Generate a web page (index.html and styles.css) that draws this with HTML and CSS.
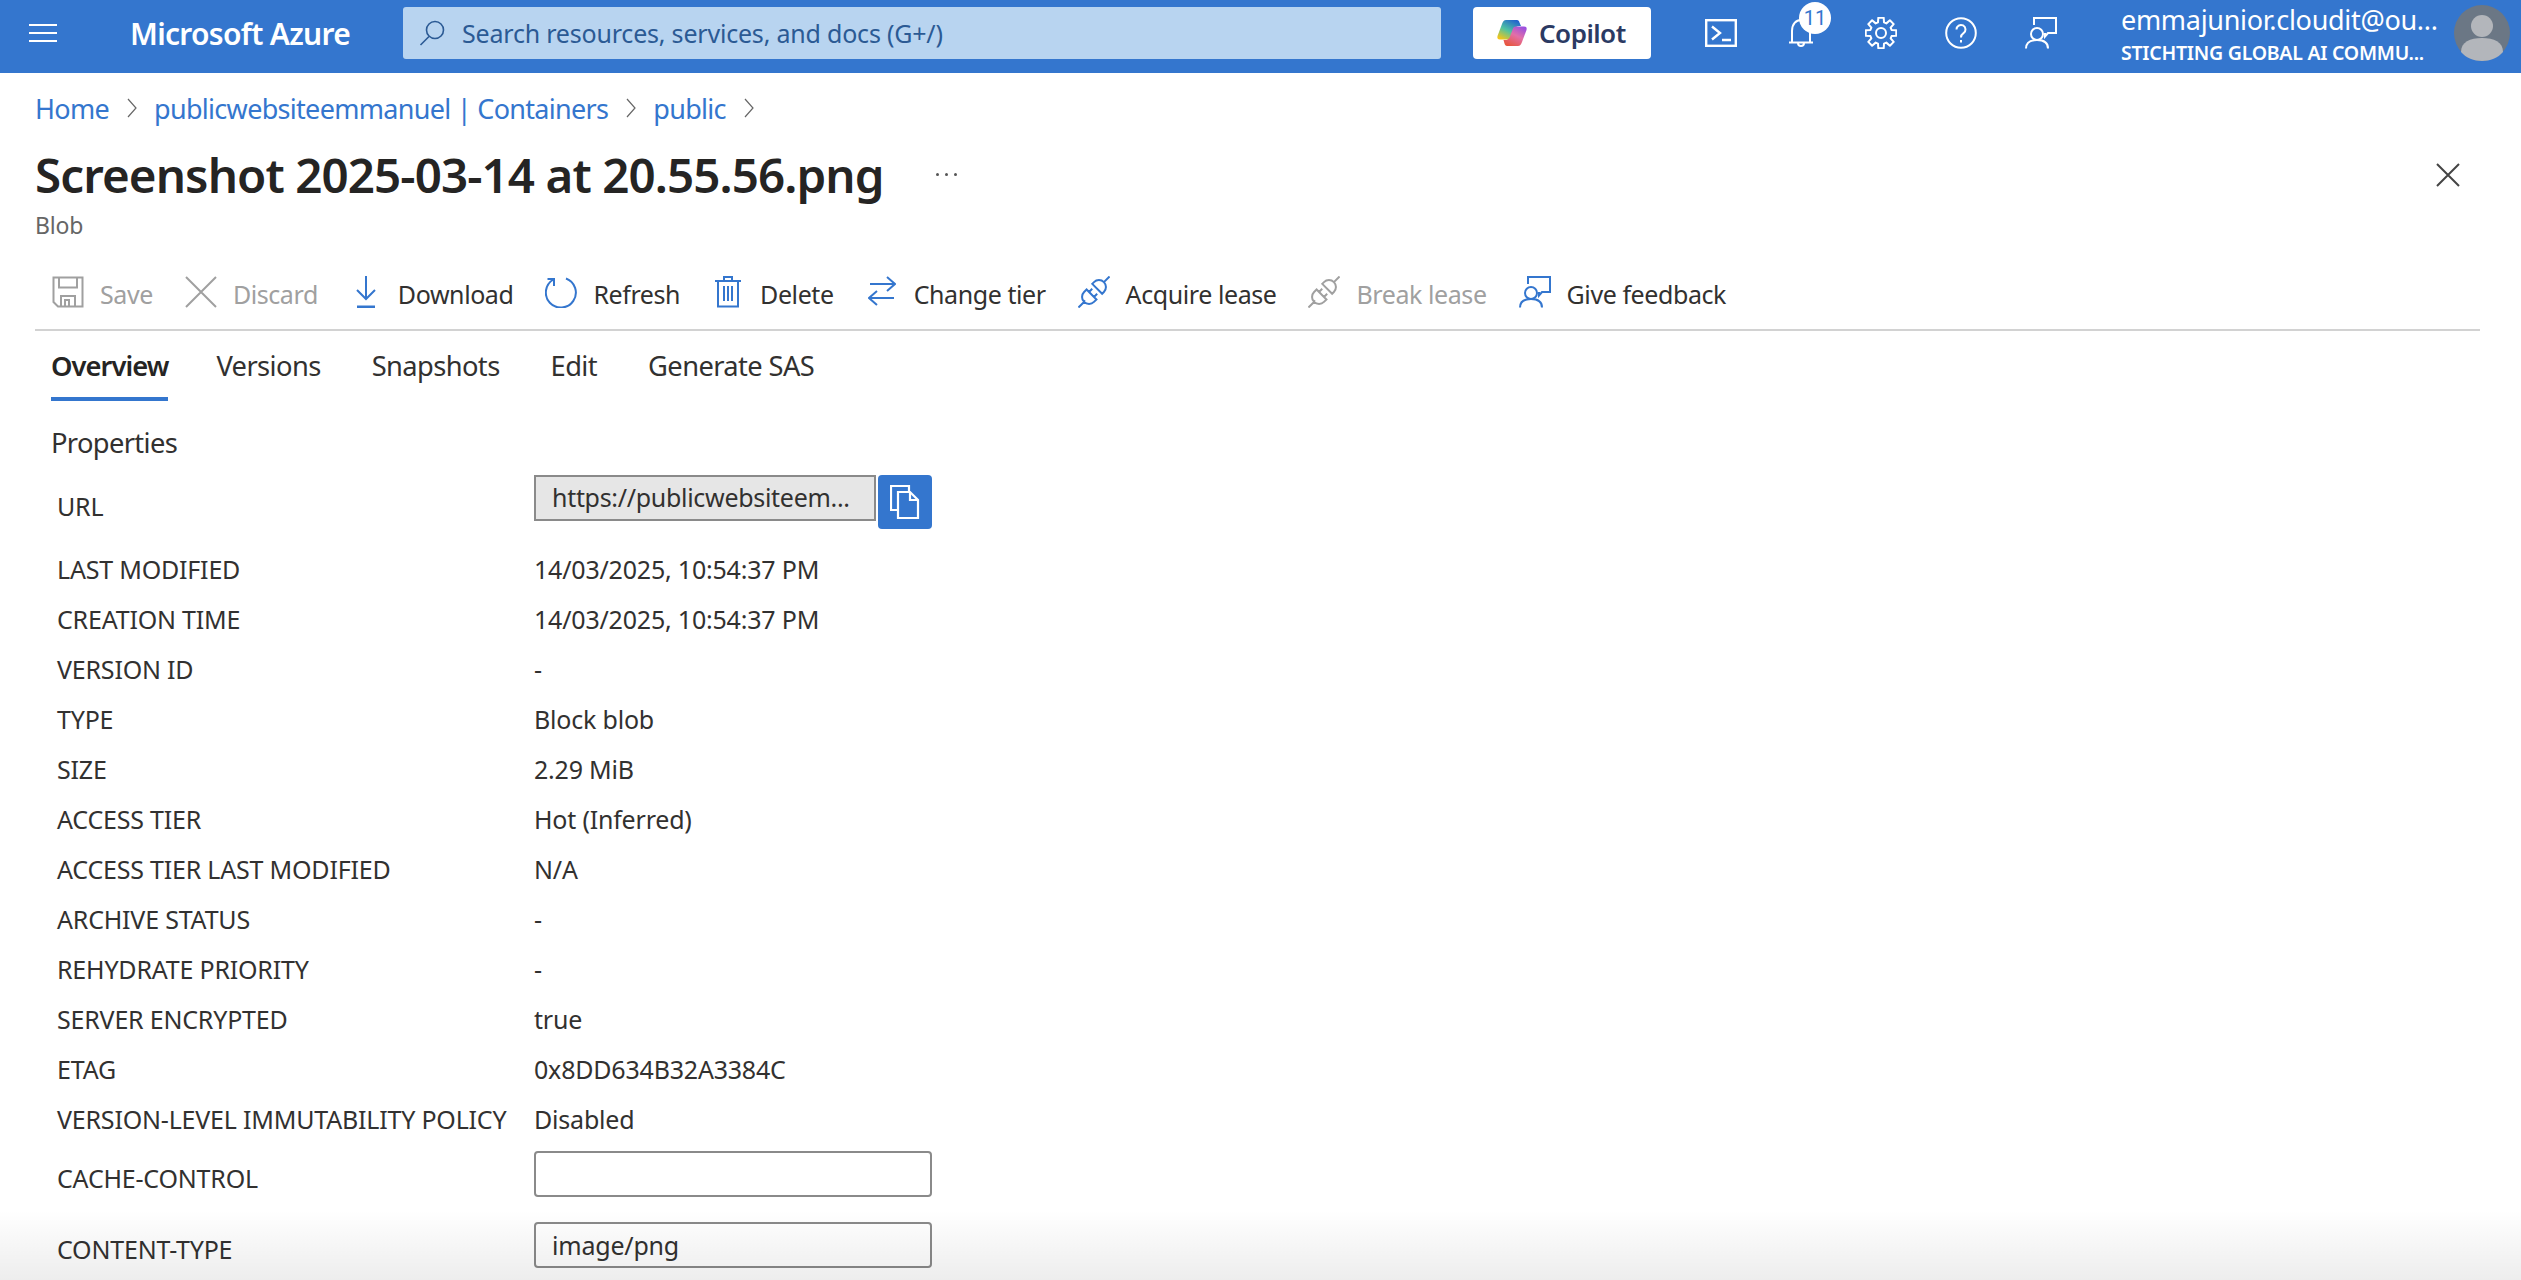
FILE: index.html
```html
<!DOCTYPE html>
<html lang="en">
<head>
<meta charset="utf-8">
<title>Screenshot 2025-03-14 at 20.55.56.png - Microsoft Azure</title>
<link rel="stylesheet" href="styles.css">
</head>
<body>
<header class="topbar">
  <button class="hamburger" aria-label="Menu"><span></span><span></span><span></span></button>
  <div class="brand">Microsoft Azure</div>
  <div class="search">
    <svg class="search-icon" viewBox="0 0 26 26"><circle cx="16" cy="10" r="8.5"/><path d="M10 16.5 1.5 25"/></svg>
    <span>Search resources, services, and docs (G+/)</span>
  </div>
  <div class="copilot">
    <svg class="copilot-logo" viewBox="0 0 30 28">
      <defs>
        <linearGradient id="cpa" x1="0.2" y1="1" x2="0.8" y2="0"><stop offset="0" stop-color="#f5c518"/><stop offset="0.45" stop-color="#4fc3a1"/><stop offset="1" stop-color="#1f5fd0"/></linearGradient>
        <linearGradient id="cpb" x1="0.2" y1="1" x2="0.8" y2="0"><stop offset="0" stop-color="#e8553a"/><stop offset="0.55" stop-color="#e26fa8"/><stop offset="1" stop-color="#9a4fe0"/></linearGradient>
      </defs>
      <path fill="url(#cpa)" d="M9 1h11c1.500 0 2 1 2.500 2.500L24 7c-3-.5-5.500.5-6.500 3.500l-3 8c-.5 1.500-1.500 2-3 2H3C.5 20.500 0 19 .5 17L5 5c1-2.500 2-4 4-4z"/>
      <path fill="url(#cpb)" d="M21 27H10c-1.500 0-2-1-2.500-2.500L6.500 21c3 .5 5.500-.5 6.500-3.500l3-8c.5-1.500 1.500-2 3-2h8c2.500 0 3 1.500 2.500 3.500L25 23c-1 2.500-2 4-4 4z"/>
    </svg>
    <span>Copilot</span>
  </div>
  <div class="top-icons">
    <svg class="ti ti-term" viewBox="0 0 32 28"><rect x="1.200" y="1.200" width="29.600" height="25.600"/><path d="M7 7.500 15 14l-8 6.500M17 21h9"/></svg>
    <div class="bell">
      <svg class="ti" viewBox="0 0 24 28"><path d="M3 23V12C3 5 7 1 12 1s9 4 9 11v11M0 23.500h24M9 24c0 4 6 4 6 0"/></svg>
      <span class="badge">11</span>
    </div>
    <svg class="ti ti-gear" viewBox="0 0 32 32"><path d="M12.970 5.430 13.310.74h5.380l.34 4.690 2.300.95 3.560-3.080 3.810 3.810-3.080 3.560.95 2.300 4.690.34v5.380l-4.690.34-.95 2.300 3.080 3.560-3.810 3.810-3.560-3.080-2.300.95-.34 4.690h-5.380l-.34-4.690-2.300-.95-3.560 3.080-3.810-3.810 3.080-3.560-.95-2.300-4.690-.34v-5.380l4.690-.34.95-2.300L3.300 7.110 7.110 3.300l3.560 3.080z"/><circle cx="16" cy="16" r="5"/></svg>
    <svg class="ti ti-help" viewBox="0 0 32 32"><circle cx="16" cy="16" r="14.800"/><path d="M11.500 12.500a4.500 4.500 0 1 1 7 3.700c-1.800 1.200-2.500 2-2.500 4.300M16 23v2.500"/></svg>
    <svg class="ti ti-fb" viewBox="0 0 32 32"><path d="M9 8V1h22v15h-8l-3 3.500V16"/><circle cx="12" cy="17" r="6"/><path d="M1 31.500c0-6 4.500-8.500 11-8.500s11 2.500 11 8.500"/></svg>
  </div>
  <div class="account">
    <div class="acc-name">emmajunior.cloudit@ou...</div>
    <div class="acc-org">STICHTING GLOBAL AI COMMU...</div>
  </div>
  <svg class="avatar" viewBox="0 0 56 56"><circle cx="28" cy="28" r="28" fill="#6b7785"/><circle cx="28" cy="21" r="11" fill="#b3b6bb"/><path fill="#b3b6bb" d="M7 47c0-10 9-14 21-14s21 4 21 14c-5 6-13 9-21 9S12 53 7 47z"/></svg>
</header>

<main class="page">
  <nav class="crumbs">
    <a>Home</a>
    <svg class="chev" viewBox="0 0 10 20"><path d="M1 1l8 9-8 9"/></svg>
    <a>publicwebsiteemmanuel | Containers</a>
    <svg class="chev" viewBox="0 0 10 20"><path d="M1 1l8 9-8 9"/></svg>
    <a>public</a>
    <svg class="chev" viewBox="0 0 10 20"><path d="M1 1l8 9-8 9"/></svg>
  </nav>

  <div class="title-row">
    <h1>Screenshot 2025-03-14 at 20.55.56.png</h1>
    <div class="more"><i></i><i></i><i></i></div>
    <svg class="close" viewBox="0 0 24 24"><path d="M1 1l22 22M23 1 1 23"/></svg>
  </div>
  <div class="subtitle">Blob</div>

  <div class="toolbar">
    <div class="tool off tool-save">
      <svg viewBox="0 0 32 32"><path d="M1.500 1.500h29v29H6l-4.500-4.500z"/><path d="M7 1.500v10h18v-10M9 30.500V20h14v10.500M13 30v-6h4v6"/></svg>
      <span>Save</span>
    </div>
    <div class="tool off tool-discard">
      <svg viewBox="0 0 32 32"><path d="M1 1l30 30M31 1 1 31"/></svg>
      <span>Discard</span>
    </div>
    <div class="tool tool-download">
      <svg class="ic-narrow" viewBox="0 0 20 32"><path d="M10 0v23M1 14l9 9 9-9"/><path class="thick" d="M1 31h18"/></svg>
      <span>Download</span>
    </div>
    <div class="tool tool-refresh">
      <svg viewBox="0 0 32 32"><path d="M21 2.500a15 15 0 1 1-12.500 1"/><path d="M2.500 3h6.500V10"/></svg>
      <span>Refresh</span>
    </div>
    <div class="tool tool-delete">
      <svg class="ic-trash" viewBox="0 0 26 32"><path d="M3 5v25.500h20V5M0 5h26M9 5V1h8v4M9 10v15M13 10v15M17 10v15"/></svg>
      <span>Delete</span>
    </div>
    <div class="tool tool-tier">
      <svg class="ic-tier" viewBox="0 0 28 32"><path d="M2 8h25M19 1l8 7-8 7M26 22H1M9 15l-8 7 8 7"/></svg>
      <span>Change tier</span>
    </div>
    <div class="tool tool-acquire">
      <svg viewBox="0 0 32 32"><g transform="rotate(-45 16 16)"><path d="M-6 16H3M3 16v-1M12.500 9H9a7 7 0 0 0 0 14h3.500zM12.500 12.500H17M12.500 19.500H17M20.500 9H23a7 7 0 0 1 0 14h-2.500zM30 16h8"/></g></svg>
      <span>Acquire lease</span>
    </div>
    <div class="tool off tool-break">
      <svg viewBox="0 0 32 32"><g transform="rotate(-45 16 16)"><path d="M-6 16H3M3 16v-1M12.500 9H9a7 7 0 0 0 0 14h3.500zM12.500 12.500H17M12.500 19.500H17M20.500 9H23a7 7 0 0 1 0 14h-2.500zM30 16h8"/></g></svg>
      <span>Break lease</span>
    </div>
    <div class="tool tool-feedback">
      <svg viewBox="0 0 32 32"><path d="M9 8V1h22v15h-8l-3 3.500V16"/><circle cx="12" cy="17" r="6"/><path d="M1 31.500c0-6 4.500-8.500 11-8.500s11 2.500 11 8.500"/></svg>
      <span>Give feedback</span>
    </div>
  </div>

  <div class="tabs">
    <a class="tab active">Overview</a>
    <a class="tab">Versions</a>
    <a class="tab">Snapshots</a>
    <a class="tab">Edit</a>
    <a class="tab">Generate SAS</a>
  </div>

  <h2 class="section">Properties</h2>

  <div class="props">
    <div class="prop prop-url">
      <div class="key">URL</div>
      <div class="val url-wrap">
        <div class="url-box">https://publicwebsiteem...</div>
        <button class="copy" aria-label="Copy">
          <svg viewBox="0 0 30 34"><path d="M19 6V1H1v24h6"/><path d="M8 7h12l8 8v18H8z"/><path d="M20 7v8h8"/></svg>
        </button>
      </div>
    </div>
    <div class="prop"><div class="key">LAST MODIFIED</div><div class="val">14/03/2025, 10:54:37 PM</div></div>
    <div class="prop"><div class="key">CREATION TIME</div><div class="val">14/03/2025, 10:54:37 PM</div></div>
    <div class="prop"><div class="key">VERSION ID</div><div class="val">-</div></div>
    <div class="prop"><div class="key">TYPE</div><div class="val">Block blob</div></div>
    <div class="prop"><div class="key">SIZE</div><div class="val">2.29 MiB</div></div>
    <div class="prop"><div class="key">ACCESS TIER</div><div class="val">Hot (Inferred)</div></div>
    <div class="prop"><div class="key">ACCESS TIER LAST MODIFIED</div><div class="val">N/A</div></div>
    <div class="prop"><div class="key">ARCHIVE STATUS</div><div class="val">-</div></div>
    <div class="prop"><div class="key">REHYDRATE PRIORITY</div><div class="val">-</div></div>
    <div class="prop"><div class="key">SERVER ENCRYPTED</div><div class="val">true</div></div>
    <div class="prop"><div class="key">ETAG</div><div class="val">0x8DD634B32A3384C</div></div>
    <div class="prop"><div class="key">VERSION-LEVEL IMMUTABILITY POLICY</div><div class="val">Disabled</div></div>
    <div class="prop prop-input">
      <div class="key">CACHE-CONTROL</div>
      <input class="field" type="text" value="">
    </div>
    <div class="prop prop-input">
      <div class="key">CONTENT-TYPE</div>
      <input class="field" type="text" value="image/png">
    </div>
  </div>
</main>
<div class="bottom-fade"></div>
</body>
</html>
```

FILE: styles.css
```css
* { box-sizing: border-box; }
html, body { margin: 0; height: 1280px; overflow: hidden; background: #fff; }
body {
  font-family: "Noto Sans", "Open Sans", "Liberation Sans", sans-serif;
  font-size: 25px;
  letter-spacing: -0.2px;
  color: #323130;
}

/* top bar */
.topbar {
  height: 73px;
  padding-bottom: 7px;
  background: #3476ce;
  display: flex;
  align-items: center;
  color: #fff;
}
.hamburger {
  width: 28px;
  height: 18px;
  margin-left: 29px;
  padding: 0;
  border: 0;
  background: none;
  display: flex;
  flex-direction: column;
  justify-content: space-between;
}
.hamburger span { display: block; height: 2px; background: #fff; }
.brand {
  margin-left: 73px;
  width: 273px;
  font-size: 30px;
  font-weight: 600;
  letter-spacing: -0.7px;
  white-space: nowrap;
}
.search {
  width: 1038px;
  height: 52px;
  padding-left: 16px;
  background: #b8d4f0;
  border-radius: 3px;
  display: flex;
  align-items: center;
  color: #2b5a94;
}
.search-icon {
  width: 26px;
  height: 26px;
  margin-right: 17px;
  fill: none;
  stroke: #2b5a94;
  stroke-width: 1.6;
}
.copilot {
  width: 178px;
  height: 52px;
  margin-left: 32px;
  background: #fff;
  border-radius: 4px;
  display: flex;
  align-items: center;
  padding-left: 24px;
  color: #2b3a63;
  font-size: 26px;
  font-weight: 600;
  letter-spacing: -0.5px;
}
.copilot-logo { width: 30px; height: 28px; margin-right: 12px; }
.top-icons { display: flex; align-items: center; margin-left: 54px; width: 396px; }
.ti { display: block; fill: none; stroke: #fff; stroke-width: 2; }
.ti-term { width: 32px; height: 28px; stroke-width: 2.4; }
.bell { position: relative; width: 24px; height: 28px; margin-left: 52px; }
.bell .ti { width: 24px; height: 28px; }
.badge {
  position: absolute;
  left: 10px;
  top: -17px;
  width: 32px;
  height: 32px;
  border-radius: 50%;
  background: #fff;
  color: #3476ce;
  font-family: Roboto, sans-serif;
  font-size: 20px;
  letter-spacing: 0;
  line-height: 32px;
  text-align: center;
}
.ti-gear { width: 32px; height: 32px; margin-left: 52px; stroke-linejoin: round; }
.ti-help { width: 32px; height: 32px; margin-left: 48px; }
.ti-fb { width: 32px; height: 32px; margin-left: 48px; }
.account { width: 333px; margin-left: 20px; white-space: nowrap; padding-top: 2px; }
.acc-name { font-size: 27px; line-height: 38px; letter-spacing: -0.3px; }
.acc-org { font-size: 19.5px; line-height: 28px; font-weight: 600; letter-spacing: -0.25px; }
.avatar { width: 56px; height: 56px; }

/* page */
.page { padding: 0 41px 0 35px; }
.crumbs {
  height: 70px;
  display: flex;
  align-items: center;
  color: #3476ce;
  font-size: 27px;
  letter-spacing: -0.7px;
  white-space: nowrap;
}
.chev { width: 10px; height: 20px; margin: 0 17px 0 18px; fill: none; stroke: #666; stroke-width: 1.2; }
.title-row {
  height: 66px;
  padding-bottom: 3px;
  display: flex;
  align-items: center;
}
h1 {
  margin: 0;
  font-size: 47.5px;
  font-weight: 600;
  letter-spacing: -0.9px;
  color: #252423;
  white-space: nowrap;
}
.more { display: flex; gap: 6px; margin-left: 52px; }
.more i { width: 3px; height: 3px; border-radius: 50%; background: #555; }
.close { width: 24px; height: 24px; margin-left: auto; margin-right: 20px; fill: none; stroke: #444; stroke-width: 2; }
.subtitle { height: 32px; line-height: 32px; font-size: 23px; color: #666; }

.toolbar {
  height: 90px;
  padding: 20px 0 2px 17px;
  display: flex;
  align-items: center;
  border-bottom: 2px solid #d2d2d2;
  white-space: nowrap;
  letter-spacing: -0.42px;
}
.tool { display: flex; align-items: center; gap: 16px; margin-right: 32px; }
.tool svg {
  width: 32px;
  height: 32px;
  margin-top: -4px;
  fill: none;
  stroke: #3476ce;
  stroke-width: 2;
  flex: none;
}
.tool svg.ic-narrow { width: 20px; margin-left: 6px; margin-right: 6px; }
.tool svg.ic-trash { width: 26px; margin-left: 3px; margin-right: 3px; }
.tool svg.ic-tier { width: 28px; margin-left: 2px; margin-right: 2px; }
.tool .thick { stroke-width: 3; }
.tool.off { color: #a0a0a0; }
.tool.off svg { stroke: #a0a0a0; }

.tabs { height: 70px; padding-left: 16px; display: flex; gap: 51px; font-size: 27.3px; letter-spacing: -0.6px; }
.tab { height: 70px; padding-top: 4px; line-height: 62px; white-space: nowrap; border-bottom: 4px solid transparent; }
.tab.active { margin-right: -3px; font-weight: 600; letter-spacing: -0.95px; color: #252423; border-bottom-color: #3476ce; }

.section {
  height: 74px;
  margin: 0;
  padding: 20px 0 0 16px;
  font-size: 27.3px;
  font-weight: 400;
  line-height: 44px;
  letter-spacing: -0.65px;
}

.props { padding-left: 22px; }
.prop { display: flex; align-items: center; height: 50px; white-space: nowrap; }
.key { width: 477px; flex: none; }
.prop-url { height: 54px; margin-bottom: 15px; }
.prop-url .key { padding-top: 8px; }
.url-wrap { display: flex; align-items: flex-start; height: 54px; gap: 2px; }
.url-box {
  width: 342px;
  height: 46px;
  padding-left: 16px;
  border: 2px solid #8a8a8a;
  background: #e6e6e6;
  line-height: 40px;
  letter-spacing: -0.3px;
}
.copy {
  width: 54px;
  height: 54px;
  padding: 0;
  border: 0;
  border-radius: 4px;
  background: #3476ce;
  display: flex;
  align-items: center;
  justify-content: center;
}
.copy svg { width: 30px; height: 34px; fill: none; stroke: #fff; stroke-width: 2.2; }
.prop-input { height: 46px; margin-top: 7px; }
.prop-input + .prop-input { margin-top: 25px; }
.prop-input .key { padding-top: 8px; }
.field {
  width: 398px;
  height: 46px;
  padding: 0 16px;
  border: 2px solid #8a8a8a;
  border-radius: 4px;
  background: #fff;
  font: inherit;
  letter-spacing: inherit;
  color: #323130;
  outline: none;
}

/* soft shadow over the bottom edge of the page */
.bottom-fade {
  position: absolute;
  left: 0;
  right: 0;
  bottom: 0;
  height: 70px;
  background: linear-gradient(rgba(0,0,0,0), rgba(0,0,0,0.07));
  pointer-events: none;
}
```
